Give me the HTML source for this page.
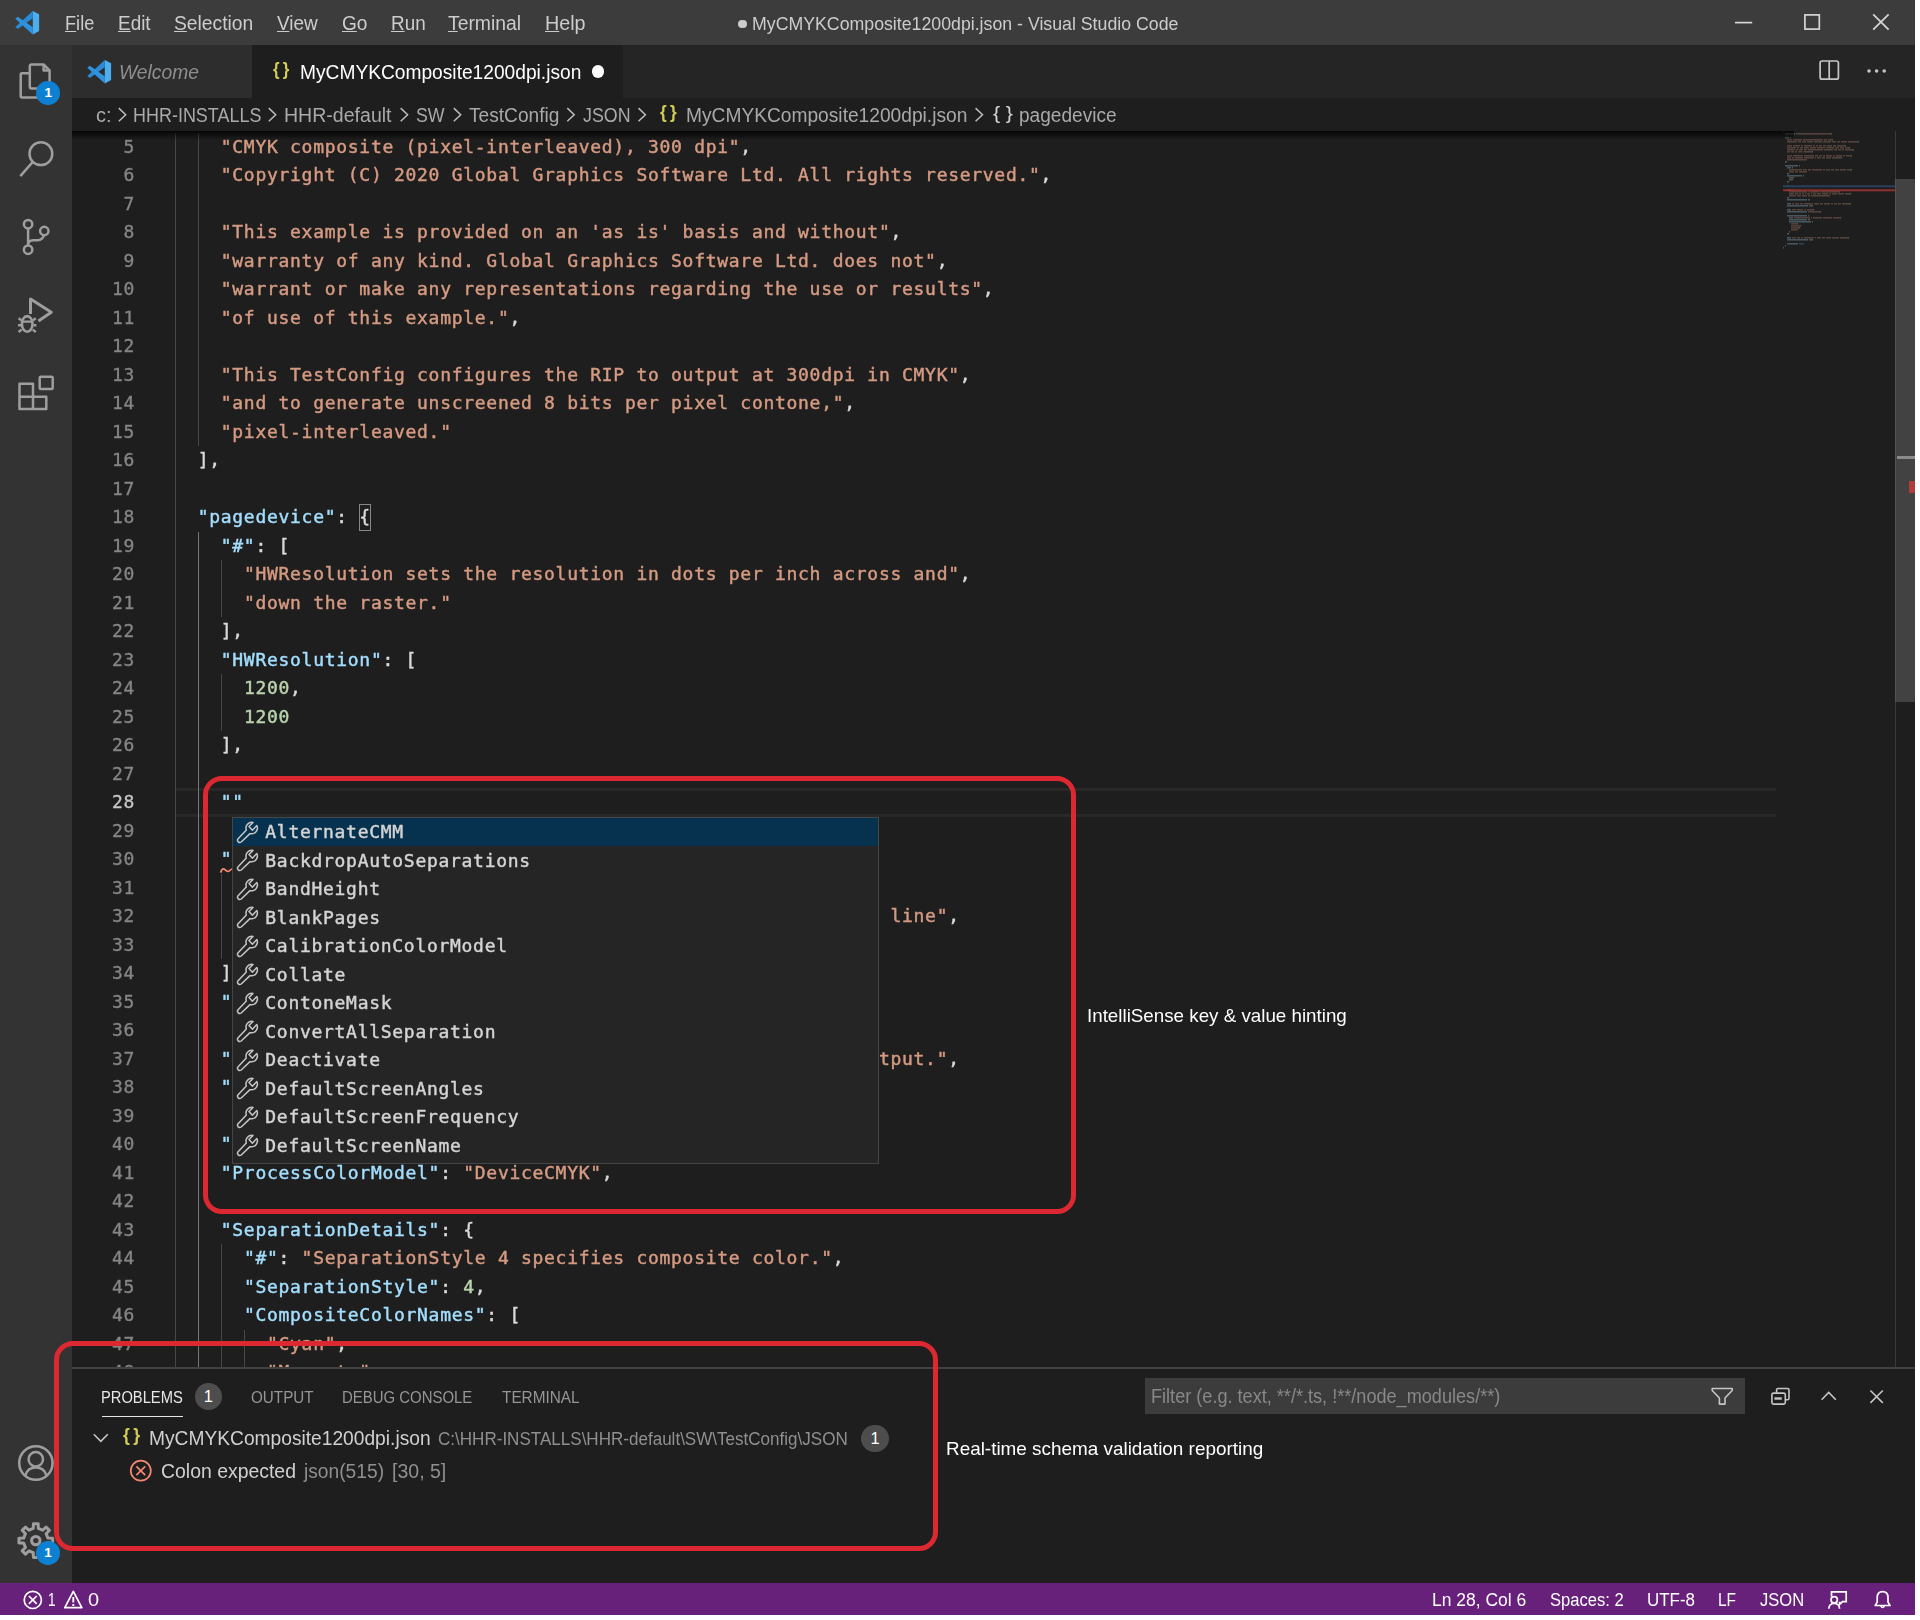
<!DOCTYPE html>
<html lang="en">
<head>
<meta charset="utf-8">
<title>MyCMYKComposite1200dpi.json - Visual Studio Code</title>
<style>
*{box-sizing:border-box}
html,body{margin:0;padding:0;background:#ffffff;}
body{width:1920px;height:1620px;position:relative;overflow:hidden;font-family:"Liberation Sans", Arial, sans-serif;}
#win{position:absolute;left:0;top:0;width:1915px;height:1615px;background:#1e1e1e;overflow:hidden}
.abs{position:absolute}
#titlebar{position:absolute;left:0;top:0;width:1915px;height:45px;background:#3c3c3c}
#activity{position:absolute;left:0;top:45px;width:72px;height:1538px;background:#333333}
#tabs{position:absolute;left:72px;top:45px;width:1843px;height:52.5px;background:#252526}
#tab1{position:absolute;left:0;top:0;width:179.7px;height:52.5px;background:#2d2d2d}
#tab2{position:absolute;left:179.7px;top:0;width:371px;height:52.5px;background:#1e1e1e}
#crumbs{position:absolute;left:72px;top:97.5px;width:1843px;height:33px;background:#1e1e1e}
#editor{position:absolute;left:72px;top:130.5px;width:1843px;height:1237.5px;background:#1e1e1e;overflow:hidden}
#edin{position:absolute;left:-72px;top:-130.5px;width:1915px;height:1615px;will-change:transform}
#texts{position:absolute;left:0;top:0;width:1915px;height:1615px;will-change:transform}
#shadow{position:absolute;left:72px;top:130.5px;width:1722px;height:9px;background:linear-gradient(#000000cc,#00000000);}
#panel{position:absolute;left:72px;top:1367.4px;width:1843px;height:215.1px;background:#1e1e1e;border-top:2px solid #414141}
#status{position:absolute;left:0;top:1582.5px;width:1915px;height:32.5px;background:#68217a}
.tx{position:absolute;white-space:pre;transform-origin:0 0;display:block}
.tx u{text-decoration-thickness:1.4px;text-underline-offset:0.6px}
.ln{position:absolute;left:72px;width:63px;text-align:right;font-family:"DejaVu Sans Mono", "Liberation Mono", monospace;font-size:18px;letter-spacing:0.709px;line-height:28.5px;height:28.5px;color:#858585;white-space:pre;-webkit-text-stroke:0.35px}
.ln.act{color:#c6c6c6}
.cl{position:absolute;left:174.6px;font-family:"DejaVu Sans Mono", "Liberation Mono", monospace;font-size:18px;letter-spacing:0.709px;line-height:28.5px;height:28.5px;color:#d4d4d4;white-space:pre;-webkit-text-stroke:0.45px}
.ig{position:absolute;width:1.5px}
#curline{position:absolute;left:174.6px;top:788.0px;width:1601.4px;height:28.5px;border-top:3px solid #282828;border-bottom:3px solid #282828}
#suggest{position:absolute;left:231.5px;top:816.5px;width:647.8px;height:347px;background:#252526;border:1.5px solid #454545;overflow:hidden}
.sr{position:absolute;left:0;width:100%;height:28.5px}
.sr.sel{background:#07324f}
.sr .wr{position:absolute;left:-1px;top:0}
.sr .st{position:absolute;left:32.8px;top:0.5px;font-family:"DejaVu Sans Mono", "Liberation Mono", monospace;font-size:18px;letter-spacing:0.709px;line-height:28.5px;color:#d4d4d4;white-space:pre;-webkit-text-stroke:0.45px}
.red{position:absolute;border:5.7px solid #dc2830;border-radius:19px}
.badge{position:absolute;border-radius:50%;color:#fff;text-align:center;font-family:"Liberation Sans", Arial, sans-serif}
</style>
</head>
<body>
<div id="win">

<div id="titlebar">
<svg class="abs" style="left:0;top:0" width="60" height="45" viewBox="0 0 60 45"><polygon points="32.8,11.1 39.1,14.25 39.1,31.1 32.8,34.5" fill="#4dadee"/><polygon points="32.8,11.1 32.8,18.3 17.8,29.0 15.3,26.9" fill="#2a8ad4"/><polygon points="32.8,34.5 32.8,27.3 17.8,16.7 15.3,18.7" fill="#2e93df"/></svg>
<div class="abs" style="left:738.3px;top:19.8px;width:8.6px;height:8.6px;border-radius:50%;background:#cccccc"></div>
<svg class="abs" style="left:1720px;top:0" width="195" height="45" viewBox="1720 0 195 45" fill="none" stroke="#d6d6d6" stroke-width="1.7">
<path d="M1735,22.6 H1752.2"/><rect x="1804.9" y="14.9" width="14.4" height="14.2"/><path d="M1873.2,14.3 L1888.6,29.7 M1888.6,14.3 L1873.2,29.7"/>
</svg>
</div>

<div id="activity"></div>
<svg class="abs" style="left:0;top:0" width="72" height="1583" viewBox="0 0 72 1583"><path d="M43.6,64.5 H31.6 Q29.8,64.5 29.8,66.3 V86.8 Q29.8,88.6 31.6,88.6 H47.8 Q49.6,88.6 49.6,86.8 V70.5 Z M43.6,64.5 V70.5 H49.6 M28.5,73.3 H22.1 Q20.7,73.3 20.7,74.7 V96 Q20.7,97.4 22.1,97.4 H39.5 Q40.9,97.4 40.9,96 V89.5" fill="none" stroke="#9e9e9e" stroke-width="2.5" stroke-linejoin="round"/><circle cx="40.9" cy="153.7" r="11.4" fill="none" stroke="#9e9e9e" stroke-width="2.5"/><path d="M32.6,162.2 L20.3,176.2" stroke="#9e9e9e" stroke-width="2.5" fill="none"/><circle cx="28.1" cy="224.2" r="4.2" fill="none" stroke="#9e9e9e" stroke-width="2.5"/><circle cx="28.1" cy="249.7" r="4.2" fill="none" stroke="#9e9e9e" stroke-width="2.5"/><circle cx="44.3" cy="231" r="4.2" fill="none" stroke="#9e9e9e" stroke-width="2.5"/><path d="M28.1,228.4 V245.5 M28.1,245 Q28.1,240.4 33,240.2 H37.5 Q42.8,239.8 43.9,235.2" fill="none" stroke="#9e9e9e" stroke-width="2.5"/><path d="M30.5,313.9 V299 L51.3,312.2 L38.4,321" fill="none" stroke="#9e9e9e" stroke-width="3" stroke-linejoin="round"/><ellipse cx="27.2" cy="323.9" rx="5.3" ry="7.8" fill="none" stroke="#9e9e9e" stroke-width="2.6"/><path d="M22,321.6 H32.4 M21.4,320.4 L18.6,318.2 M21,325.2 H18 M21.6,329.6 L18.6,332 M33,320.4 L35.8,318.2 M33.4,325.2 H36.4 M32.8,329.6 L35.8,332" fill="none" stroke="#9e9e9e" stroke-width="2.4"/><path d="M19.5,383.8 H33 V409 H19.5 Z M33,396.8 H46.3 V409 H33 M19.5,396.8 H33" fill="none" stroke="#9e9e9e" stroke-width="2.5" stroke-linejoin="round"/><rect x="39.7" y="376.7" width="13" height="12.4" rx="1.2" fill="none" stroke="#9e9e9e" stroke-width="2.5"/><circle cx="35.9" cy="1463" r="16.7" fill="none" stroke="#9e9e9e" stroke-width="2.5"/><circle cx="35.8" cy="1459.2" r="7.2" fill="none" stroke="#9e9e9e" stroke-width="2.5"/><path d="M25.2,1475.8 Q27.5,1467.6 35.8,1467.6 Q44.1,1467.6 46.6,1475.8" fill="none" stroke="#9e9e9e" stroke-width="2.5"/><path d="M33.28,1528.46 L33.45,1523.76 L38.15,1523.76 L38.32,1528.46 L42.60,1530.23 L46.05,1527.03 L49.37,1530.35 L46.17,1533.80 L47.94,1538.08 L52.64,1538.25 L52.64,1542.95 L47.94,1543.12 L46.17,1547.40 L49.37,1550.85 L46.05,1554.17 L42.60,1550.97 L38.32,1552.74 L38.15,1557.44 L33.45,1557.44 L33.28,1552.74 L29.00,1550.97 L25.55,1554.17 L22.23,1550.85 L25.43,1547.40 L23.66,1543.12 L18.96,1542.95 L18.96,1538.25 L23.66,1538.08 L25.43,1533.80 L22.23,1530.35 L25.55,1527.03 L29.00,1530.23 Z" fill="none" stroke="#9e9e9e" stroke-width="3" stroke-linejoin="round"/><circle cx="35.8" cy="1540.6" r="4.2" fill="none" stroke="#9e9e9e" stroke-width="3"/></svg>
<div class="badge" style="left:36.4px;top:81.2px;width:23.6px;height:23.6px;background:#0e80d1;font-size:13.5px;font-weight:bold;line-height:23.6px">1</div>
<div class="badge" style="left:36px;top:1541px;width:23.8px;height:23.8px;background:#0e80d1;font-size:13.5px;font-weight:bold;line-height:23.8px">1</div>

<div id="tabs">
<div id="tab1"></div><div id="tab2"></div>
</div>
<svg class="abs" style="left:72px;top:48.7px" width="60" height="45" viewBox="0 0 60 45"><polygon points="32.8,11.1 39.1,14.25 39.1,31.1 32.8,34.5" fill="#4dadee"/><polygon points="32.8,11.1 32.8,18.3 17.8,29.0 15.3,26.9" fill="#2a8ad4"/><polygon points="32.8,34.5 32.8,27.3 17.8,16.7 15.3,18.7" fill="#2e93df"/></svg>
<div class="abs" style="left:591.8px;top:65.4px;width:12.4px;height:12.4px;border-radius:50%;background:#ffffff"></div>
<svg class="abs" style="left:1800px;top:45px" width="115" height="52" viewBox="1800 45 115 52" fill="none" stroke="#c5c5c5" stroke-width="1.7">
<rect x="1820.1" y="61" width="18.3" height="18.2" rx="2"/><path d="M1829.2,61 V79.2"/>
<g fill="#c5c5c5" stroke="none"><circle cx="1869" cy="71" r="1.8"/><circle cx="1876.6" cy="71" r="1.8"/><circle cx="1884.2" cy="71" r="1.8"/></g>
</svg>

<div id="crumbs"></div>
<svg class="abs" style="left:72px;top:97.5px" width="1100" height="33" viewBox="72 97.5 1100 33" fill="none" stroke="#bdbdbd" stroke-width="1.5"><path d="M118.8,107.6 l6.9,6.6 l-6.9,6.6" /><path d="M268.8,107.6 l6.9,6.6 l-6.9,6.6" /><path d="M400.7,107.6 l6.9,6.6 l-6.9,6.6" /><path d="M453.8,107.6 l6.9,6.6 l-6.9,6.6" /><path d="M567.3,107.6 l6.9,6.6 l-6.9,6.6" /><path d="M638.5,107.6 l6.9,6.6 l-6.9,6.6" /><path d="M975.6,107.6 l6.9,6.6 l-6.9,6.6" /></svg>

<div id="editor"><div id="edin">
<div id="curline"></div>
<div class="ig" style="left:174.6px;top:132.7px;height:1254.0px;background:#474747"></div>
<div class="ig" style="left:197.7px;top:132.7px;height:313.5px;background:#474747"></div>
<div class="ig" style="left:197.7px;top:531.7px;height:855.0px;background:#767676"></div>
<div class="ig" style="left:220.8px;top:560.2px;height:57.0px;background:#474747"></div>
<div class="ig" style="left:220.8px;top:674.2px;height:57.0px;background:#474747"></div>
<div class="ig" style="left:220.8px;top:873.7px;height:85.5px;background:#474747"></div>
<div class="ig" style="left:220.8px;top:1244.2px;height:142.5px;background:#474747"></div>
<div class="ig" style="left:243.9px;top:1329.7px;height:57.0px;background:#474747"></div>
<div class="ln" style="top:132.70px">5</div>
<div class="cl" style="top:132.70px">    <span style="color:#d59a82">"CMYK composite (pixel-interleaved), 300 dpi"</span><span style="color:#dadada">,</span></div>
<div class="ln" style="top:161.20px">6</div>
<div class="cl" style="top:161.20px">    <span style="color:#d59a82">"Copyright (C) 2020 Global Graphics Software Ltd. All rights reserved."</span><span style="color:#dadada">,</span></div>
<div class="ln" style="top:189.70px">7</div>
<div class="ln" style="top:218.20px">8</div>
<div class="cl" style="top:218.20px">    <span style="color:#d59a82">"This example is provided on an 'as is' basis and without"</span><span style="color:#dadada">,</span></div>
<div class="ln" style="top:246.70px">9</div>
<div class="cl" style="top:246.70px">    <span style="color:#d59a82">"warranty of any kind. Global Graphics Software Ltd. does not"</span><span style="color:#dadada">,</span></div>
<div class="ln" style="top:275.20px">10</div>
<div class="cl" style="top:275.20px">    <span style="color:#d59a82">"warrant or make any representations regarding the use or results"</span><span style="color:#dadada">,</span></div>
<div class="ln" style="top:303.70px">11</div>
<div class="cl" style="top:303.70px">    <span style="color:#d59a82">"of use of this example."</span><span style="color:#dadada">,</span></div>
<div class="ln" style="top:332.20px">12</div>
<div class="ln" style="top:360.70px">13</div>
<div class="cl" style="top:360.70px">    <span style="color:#d59a82">"This TestConfig configures the RIP to output at 300dpi in CMYK"</span><span style="color:#dadada">,</span></div>
<div class="ln" style="top:389.20px">14</div>
<div class="cl" style="top:389.20px">    <span style="color:#d59a82">"and to generate unscreened 8 bits per pixel contone,"</span><span style="color:#dadada">,</span></div>
<div class="ln" style="top:417.70px">15</div>
<div class="cl" style="top:417.70px">    <span style="color:#d59a82">"pixel-interleaved."</span></div>
<div class="ln" style="top:446.20px">16</div>
<div class="cl" style="top:446.20px">  <span style="color:#dadada">],</span></div>
<div class="ln" style="top:474.70px">17</div>
<div class="ln" style="top:503.20px">18</div>
<div class="cl" style="top:503.20px">  <span style="color:#a3defe">"pagedevice"</span><span style="color:#dadada">: {</span></div>
<div class="ln" style="top:531.70px">19</div>
<div class="cl" style="top:531.70px">    <span style="color:#a3defe">"#"</span><span style="color:#dadada">: [</span></div>
<div class="ln" style="top:560.20px">20</div>
<div class="cl" style="top:560.20px">      <span style="color:#d59a82">"HWResolution sets the resolution in dots per inch across and"</span><span style="color:#dadada">,</span></div>
<div class="ln" style="top:588.70px">21</div>
<div class="cl" style="top:588.70px">      <span style="color:#d59a82">"down the raster."</span></div>
<div class="ln" style="top:617.20px">22</div>
<div class="cl" style="top:617.20px">    <span style="color:#dadada">],</span></div>
<div class="ln" style="top:645.70px">23</div>
<div class="cl" style="top:645.70px">    <span style="color:#a3defe">"HWResolution"</span><span style="color:#dadada">: [</span></div>
<div class="ln" style="top:674.20px">24</div>
<div class="cl" style="top:674.20px">      <span style="color:#bbd3ae">1200</span><span style="color:#dadada">,</span></div>
<div class="ln" style="top:702.70px">25</div>
<div class="cl" style="top:702.70px">      <span style="color:#bbd3ae">1200</span></div>
<div class="ln" style="top:731.20px">26</div>
<div class="cl" style="top:731.20px">    <span style="color:#dadada">],</span></div>
<div class="ln" style="top:759.70px">27</div>
<div class="ln act" style="top:788.20px">28</div>
<div class="cl" style="top:788.20px">    <span style="color:#a3defe">""</span></div>
<div class="ln" style="top:816.70px">29</div>
<div class="ln" style="top:845.20px">30</div>
<div class="cl" style="top:845.20px">    <span style="color:#a3defe">"#"</span><span style="color:#dadada">: [</span></div>
<div class="ln" style="top:873.70px">31</div>
<div class="cl" style="top:873.70px">      <span style="color:#d59a82">"InterleavingStyle 1 specifies pixel-interleaved,"</span><span style="color:#dadada">,</span></div>
<div class="ln" style="top:902.20px">32</div>
<div class="cl" style="top:902.20px">      <span style="color:#d59a82">"that is, C, M, Y and K for each pixel, in every raster line"</span><span style="color:#dadada">,</span></div>
<div class="ln" style="top:930.70px">33</div>
<div class="cl" style="top:930.70px">      <span style="color:#d59a82">"rather than band- or frame-interleaved."</span></div>
<div class="ln" style="top:959.20px">34</div>
<div class="cl" style="top:959.20px">    <span style="color:#dadada">],</span></div>
<div class="ln" style="top:987.70px">35</div>
<div class="cl" style="top:987.70px">    <span style="color:#a3defe">"InterleavingStyle"</span><span style="color:#dadada">: </span><span style="color:#bbd3ae">1</span><span style="color:#dadada">,</span></div>
<div class="ln" style="top:1016.20px">36</div>
<div class="ln" style="top:1044.70px">37</div>
<div class="cl" style="top:1044.70px">    <span style="color:#a3defe">"#"</span><span style="color:#dadada">: </span><span style="color:#d59a82">"8 bits per component gives 256 levels in the RIP output."</span><span style="color:#dadada">,</span></div>
<div class="ln" style="top:1073.20px">38</div>
<div class="cl" style="top:1073.20px">    <span style="color:#a3defe">"ValuesPerComponent"</span><span style="color:#dadada">: </span><span style="color:#bbd3ae">256</span><span style="color:#dadada">,</span></div>
<div class="ln" style="top:1101.70px">39</div>
<div class="ln" style="top:1130.20px">40</div>
<div class="cl" style="top:1130.20px">    <span style="color:#a3defe">"#"</span><span style="color:#dadada">: </span><span style="color:#d59a82">"The output is CMYK."</span><span style="color:#dadada">,</span></div>
<div class="ln" style="top:1158.70px">41</div>
<div class="cl" style="top:1158.70px">    <span style="color:#a3defe">"ProcessColorModel"</span><span style="color:#dadada">: </span><span style="color:#d59a82">"DeviceCMYK"</span><span style="color:#dadada">,</span></div>
<div class="ln" style="top:1187.20px">42</div>
<div class="ln" style="top:1215.70px">43</div>
<div class="cl" style="top:1215.70px">    <span style="color:#a3defe">"SeparationDetails"</span><span style="color:#dadada">: {</span></div>
<div class="ln" style="top:1244.20px">44</div>
<div class="cl" style="top:1244.20px">      <span style="color:#a3defe">"#"</span><span style="color:#dadada">: </span><span style="color:#d59a82">"SeparationStyle 4 specifies composite color."</span><span style="color:#dadada">,</span></div>
<div class="ln" style="top:1272.70px">45</div>
<div class="cl" style="top:1272.70px">      <span style="color:#a3defe">"SeparationStyle"</span><span style="color:#dadada">: </span><span style="color:#bbd3ae">4</span><span style="color:#dadada">,</span></div>
<div class="ln" style="top:1301.20px">46</div>
<div class="cl" style="top:1301.20px">      <span style="color:#a3defe">"CompositeColorNames"</span><span style="color:#dadada">: [</span></div>
<div class="ln" style="top:1329.70px">47</div>
<div class="cl" style="top:1329.70px">        <span style="color:#d59a82">"Cyan"</span><span style="color:#dadada">,</span></div>
<div class="ln" style="top:1358.20px">48</div>
<div class="cl" style="top:1358.20px">        <span style="color:#d59a82">"Magenta"</span><span style="color:#dadada">,</span></div>
<div class="abs" style="left:358.6px;top:503.8px;width:12.6px;height:27px;border:1.5px solid #888888"></div>
<svg class="abs" style="left:218px;top:864px" width="20" height="12" viewBox="218 864 20 12" fill="none" stroke="#f48771" stroke-width="1.8"><path d="M220.6,872.6 q1.9,-5.6 4.4,-2.9 q2.6,2.9 4.6,0.9 q1.2,-1.3 2.4,-1.6"/></svg>
<svg class="abs" style="left:0;top:0" width="1915" height="400" viewBox="0 0 1915 400"><g opacity="0.42"><rect x="1783" y="131.3" width="1" height="1.1" fill="#dadada"/><rect x="1785" y="133.3" width="9" height="1.1" fill="#a3defe"/><rect x="1794" y="133.3" width="1" height="1.1" fill="#dadada"/><rect x="1796" y="133.3" width="35" height="1.1" fill="#d59a82"/><rect x="1831" y="133.3" width="1" height="1.1" fill="#dadada"/><rect x="1785" y="137.3" width="3" height="1.1" fill="#a3defe"/><rect x="1788" y="137.3" width="1" height="1.1" fill="#dadada"/><rect x="1790" y="137.3" width="1" height="1.1" fill="#dadada"/><rect x="1787" y="139.3" width="5" height="1.1" fill="#d59a82"/><rect x="1793" y="139.3" width="9" height="1.1" fill="#d59a82"/><rect x="1803" y="139.3" width="20" height="1.1" fill="#d59a82"/><rect x="1824" y="139.3" width="3" height="1.1" fill="#d59a82"/><rect x="1828" y="139.3" width="4" height="1.1" fill="#d59a82"/><rect x="1832" y="139.3" width="1" height="1.1" fill="#dadada"/><rect x="1787" y="141.3" width="10" height="1.1" fill="#d59a82"/><rect x="1798" y="141.3" width="3" height="1.1" fill="#d59a82"/><rect x="1802" y="141.3" width="4" height="1.1" fill="#d59a82"/><rect x="1807" y="141.3" width="6" height="1.1" fill="#d59a82"/><rect x="1814" y="141.3" width="8" height="1.1" fill="#d59a82"/><rect x="1823" y="141.3" width="8" height="1.1" fill="#d59a82"/><rect x="1832" y="141.3" width="4" height="1.1" fill="#d59a82"/><rect x="1837" y="141.3" width="3" height="1.1" fill="#d59a82"/><rect x="1841" y="141.3" width="6" height="1.1" fill="#d59a82"/><rect x="1848" y="141.3" width="10" height="1.1" fill="#d59a82"/><rect x="1858" y="141.3" width="1" height="1.1" fill="#dadada"/><rect x="1787" y="145.3" width="5" height="1.1" fill="#d59a82"/><rect x="1793" y="145.3" width="7" height="1.1" fill="#d59a82"/><rect x="1801" y="145.3" width="2" height="1.1" fill="#d59a82"/><rect x="1804" y="145.3" width="8" height="1.1" fill="#d59a82"/><rect x="1813" y="145.3" width="2" height="1.1" fill="#d59a82"/><rect x="1816" y="145.3" width="2" height="1.1" fill="#d59a82"/><rect x="1819" y="145.3" width="3" height="1.1" fill="#d59a82"/><rect x="1823" y="145.3" width="3" height="1.1" fill="#d59a82"/><rect x="1827" y="145.3" width="5" height="1.1" fill="#d59a82"/><rect x="1833" y="145.3" width="3" height="1.1" fill="#d59a82"/><rect x="1837" y="145.3" width="8" height="1.1" fill="#d59a82"/><rect x="1845" y="145.3" width="1" height="1.1" fill="#dadada"/><rect x="1787" y="147.3" width="9" height="1.1" fill="#d59a82"/><rect x="1797" y="147.3" width="2" height="1.1" fill="#d59a82"/><rect x="1800" y="147.3" width="3" height="1.1" fill="#d59a82"/><rect x="1804" y="147.3" width="5" height="1.1" fill="#d59a82"/><rect x="1810" y="147.3" width="6" height="1.1" fill="#d59a82"/><rect x="1817" y="147.3" width="8" height="1.1" fill="#d59a82"/><rect x="1826" y="147.3" width="8" height="1.1" fill="#d59a82"/><rect x="1835" y="147.3" width="4" height="1.1" fill="#d59a82"/><rect x="1840" y="147.3" width="4" height="1.1" fill="#d59a82"/><rect x="1845" y="147.3" width="4" height="1.1" fill="#d59a82"/><rect x="1849" y="147.3" width="1" height="1.1" fill="#dadada"/><rect x="1787" y="149.3" width="8" height="1.1" fill="#d59a82"/><rect x="1796" y="149.3" width="2" height="1.1" fill="#d59a82"/><rect x="1799" y="149.3" width="4" height="1.1" fill="#d59a82"/><rect x="1804" y="149.3" width="3" height="1.1" fill="#d59a82"/><rect x="1808" y="149.3" width="15" height="1.1" fill="#d59a82"/><rect x="1824" y="149.3" width="9" height="1.1" fill="#d59a82"/><rect x="1834" y="149.3" width="3" height="1.1" fill="#d59a82"/><rect x="1838" y="149.3" width="3" height="1.1" fill="#d59a82"/><rect x="1842" y="149.3" width="2" height="1.1" fill="#d59a82"/><rect x="1845" y="149.3" width="8" height="1.1" fill="#d59a82"/><rect x="1853" y="149.3" width="1" height="1.1" fill="#dadada"/><rect x="1787" y="151.3" width="3" height="1.1" fill="#d59a82"/><rect x="1791" y="151.3" width="3" height="1.1" fill="#d59a82"/><rect x="1795" y="151.3" width="2" height="1.1" fill="#d59a82"/><rect x="1798" y="151.3" width="4" height="1.1" fill="#d59a82"/><rect x="1803" y="151.3" width="9" height="1.1" fill="#d59a82"/><rect x="1812" y="151.3" width="1" height="1.1" fill="#dadada"/><rect x="1787" y="155.3" width="5" height="1.1" fill="#d59a82"/><rect x="1793" y="155.3" width="10" height="1.1" fill="#d59a82"/><rect x="1804" y="155.3" width="10" height="1.1" fill="#d59a82"/><rect x="1815" y="155.3" width="3" height="1.1" fill="#d59a82"/><rect x="1819" y="155.3" width="3" height="1.1" fill="#d59a82"/><rect x="1823" y="155.3" width="2" height="1.1" fill="#d59a82"/><rect x="1826" y="155.3" width="6" height="1.1" fill="#d59a82"/><rect x="1833" y="155.3" width="2" height="1.1" fill="#d59a82"/><rect x="1836" y="155.3" width="6" height="1.1" fill="#d59a82"/><rect x="1843" y="155.3" width="2" height="1.1" fill="#d59a82"/><rect x="1846" y="155.3" width="5" height="1.1" fill="#d59a82"/><rect x="1851" y="155.3" width="1" height="1.1" fill="#dadada"/><rect x="1787" y="157.3" width="4" height="1.1" fill="#d59a82"/><rect x="1792" y="157.3" width="2" height="1.1" fill="#d59a82"/><rect x="1795" y="157.3" width="8" height="1.1" fill="#d59a82"/><rect x="1804" y="157.3" width="10" height="1.1" fill="#d59a82"/><rect x="1815" y="157.3" width="1" height="1.1" fill="#d59a82"/><rect x="1817" y="157.3" width="4" height="1.1" fill="#d59a82"/><rect x="1822" y="157.3" width="3" height="1.1" fill="#d59a82"/><rect x="1826" y="157.3" width="5" height="1.1" fill="#d59a82"/><rect x="1832" y="157.3" width="9" height="1.1" fill="#d59a82"/><rect x="1841" y="157.3" width="1" height="1.1" fill="#dadada"/><rect x="1787" y="159.3" width="20" height="1.1" fill="#d59a82"/><rect x="1785" y="161.3" width="2" height="1.1" fill="#dadada"/><rect x="1785" y="165.3" width="12" height="1.1" fill="#a3defe"/><rect x="1797" y="165.3" width="1" height="1.1" fill="#dadada"/><rect x="1799" y="165.3" width="1" height="1.1" fill="#dadada"/><rect x="1787" y="167.3" width="3" height="1.1" fill="#a3defe"/><rect x="1790" y="167.3" width="1" height="1.1" fill="#dadada"/><rect x="1792" y="167.3" width="1" height="1.1" fill="#dadada"/><rect x="1789" y="169.3" width="13" height="1.1" fill="#d59a82"/><rect x="1803" y="169.3" width="4" height="1.1" fill="#d59a82"/><rect x="1808" y="169.3" width="3" height="1.1" fill="#d59a82"/><rect x="1812" y="169.3" width="10" height="1.1" fill="#d59a82"/><rect x="1823" y="169.3" width="2" height="1.1" fill="#d59a82"/><rect x="1826" y="169.3" width="4" height="1.1" fill="#d59a82"/><rect x="1831" y="169.3" width="3" height="1.1" fill="#d59a82"/><rect x="1835" y="169.3" width="4" height="1.1" fill="#d59a82"/><rect x="1840" y="169.3" width="6" height="1.1" fill="#d59a82"/><rect x="1847" y="169.3" width="4" height="1.1" fill="#d59a82"/><rect x="1851" y="169.3" width="1" height="1.1" fill="#dadada"/><rect x="1789" y="171.3" width="5" height="1.1" fill="#d59a82"/><rect x="1795" y="171.3" width="3" height="1.1" fill="#d59a82"/><rect x="1799" y="171.3" width="8" height="1.1" fill="#d59a82"/><rect x="1787" y="173.3" width="2" height="1.1" fill="#dadada"/><rect x="1787" y="175.3" width="14" height="1.1" fill="#a3defe"/><rect x="1801" y="175.3" width="1" height="1.1" fill="#dadada"/><rect x="1803" y="175.3" width="1" height="1.1" fill="#dadada"/><rect x="1789" y="177.3" width="4" height="1.1" fill="#bbd3ae"/><rect x="1793" y="177.3" width="1" height="1.1" fill="#dadada"/><rect x="1789" y="179.3" width="4" height="1.1" fill="#bbd3ae"/><rect x="1787" y="181.3" width="2" height="1.1" fill="#dadada"/><rect x="1787" y="185.3" width="2" height="1.1" fill="#a3defe"/><rect x="1787" y="189.3" width="3" height="1.1" fill="#a3defe"/><rect x="1790" y="189.3" width="1" height="1.1" fill="#dadada"/><rect x="1792" y="189.3" width="1" height="1.1" fill="#dadada"/><rect x="1789" y="191.3" width="18" height="1.1" fill="#d59a82"/><rect x="1808" y="191.3" width="1" height="1.1" fill="#d59a82"/><rect x="1810" y="191.3" width="9" height="1.1" fill="#d59a82"/><rect x="1820" y="191.3" width="19" height="1.1" fill="#d59a82"/><rect x="1839" y="191.3" width="1" height="1.1" fill="#dadada"/><rect x="1789" y="193.3" width="5" height="1.1" fill="#d59a82"/><rect x="1795" y="193.3" width="3" height="1.1" fill="#d59a82"/><rect x="1799" y="193.3" width="2" height="1.1" fill="#d59a82"/><rect x="1802" y="193.3" width="2" height="1.1" fill="#d59a82"/><rect x="1805" y="193.3" width="1" height="1.1" fill="#d59a82"/><rect x="1807" y="193.3" width="3" height="1.1" fill="#d59a82"/><rect x="1811" y="193.3" width="1" height="1.1" fill="#d59a82"/><rect x="1813" y="193.3" width="3" height="1.1" fill="#d59a82"/><rect x="1817" y="193.3" width="4" height="1.1" fill="#d59a82"/><rect x="1822" y="193.3" width="6" height="1.1" fill="#d59a82"/><rect x="1829" y="193.3" width="2" height="1.1" fill="#d59a82"/><rect x="1832" y="193.3" width="5" height="1.1" fill="#d59a82"/><rect x="1838" y="193.3" width="6" height="1.1" fill="#d59a82"/><rect x="1845" y="193.3" width="5" height="1.1" fill="#d59a82"/><rect x="1850" y="193.3" width="1" height="1.1" fill="#dadada"/><rect x="1789" y="195.3" width="7" height="1.1" fill="#d59a82"/><rect x="1797" y="195.3" width="4" height="1.1" fill="#d59a82"/><rect x="1802" y="195.3" width="5" height="1.1" fill="#d59a82"/><rect x="1808" y="195.3" width="2" height="1.1" fill="#d59a82"/><rect x="1811" y="195.3" width="19" height="1.1" fill="#d59a82"/><rect x="1787" y="197.3" width="2" height="1.1" fill="#dadada"/><rect x="1787" y="199.3" width="19" height="1.1" fill="#a3defe"/><rect x="1806" y="199.3" width="1" height="1.1" fill="#dadada"/><rect x="1808" y="199.3" width="1" height="1.1" fill="#bbd3ae"/><rect x="1809" y="199.3" width="1" height="1.1" fill="#dadada"/><rect x="1787" y="203.3" width="3" height="1.1" fill="#a3defe"/><rect x="1790" y="203.3" width="1" height="1.1" fill="#dadada"/><rect x="1792" y="203.3" width="2" height="1.1" fill="#d59a82"/><rect x="1795" y="203.3" width="4" height="1.1" fill="#d59a82"/><rect x="1800" y="203.3" width="3" height="1.1" fill="#d59a82"/><rect x="1804" y="203.3" width="9" height="1.1" fill="#d59a82"/><rect x="1814" y="203.3" width="5" height="1.1" fill="#d59a82"/><rect x="1820" y="203.3" width="3" height="1.1" fill="#d59a82"/><rect x="1824" y="203.3" width="6" height="1.1" fill="#d59a82"/><rect x="1831" y="203.3" width="2" height="1.1" fill="#d59a82"/><rect x="1834" y="203.3" width="3" height="1.1" fill="#d59a82"/><rect x="1838" y="203.3" width="3" height="1.1" fill="#d59a82"/><rect x="1842" y="203.3" width="8" height="1.1" fill="#d59a82"/><rect x="1850" y="203.3" width="1" height="1.1" fill="#dadada"/><rect x="1787" y="205.3" width="20" height="1.1" fill="#a3defe"/><rect x="1807" y="205.3" width="1" height="1.1" fill="#dadada"/><rect x="1809" y="205.3" width="3" height="1.1" fill="#bbd3ae"/><rect x="1812" y="205.3" width="1" height="1.1" fill="#dadada"/><rect x="1787" y="209.3" width="3" height="1.1" fill="#a3defe"/><rect x="1790" y="209.3" width="1" height="1.1" fill="#dadada"/><rect x="1792" y="209.3" width="4" height="1.1" fill="#d59a82"/><rect x="1797" y="209.3" width="6" height="1.1" fill="#d59a82"/><rect x="1804" y="209.3" width="2" height="1.1" fill="#d59a82"/><rect x="1807" y="209.3" width="6" height="1.1" fill="#d59a82"/><rect x="1813" y="209.3" width="1" height="1.1" fill="#dadada"/><rect x="1787" y="211.3" width="19" height="1.1" fill="#a3defe"/><rect x="1806" y="211.3" width="1" height="1.1" fill="#dadada"/><rect x="1808" y="211.3" width="12" height="1.1" fill="#d59a82"/><rect x="1820" y="211.3" width="1" height="1.1" fill="#dadada"/><rect x="1787" y="215.3" width="19" height="1.1" fill="#a3defe"/><rect x="1806" y="215.3" width="1" height="1.1" fill="#dadada"/><rect x="1808" y="215.3" width="1" height="1.1" fill="#dadada"/><rect x="1789" y="217.3" width="3" height="1.1" fill="#a3defe"/><rect x="1792" y="217.3" width="1" height="1.1" fill="#dadada"/><rect x="1794" y="217.3" width="16" height="1.1" fill="#d59a82"/><rect x="1811" y="217.3" width="1" height="1.1" fill="#d59a82"/><rect x="1813" y="217.3" width="9" height="1.1" fill="#d59a82"/><rect x="1823" y="217.3" width="9" height="1.1" fill="#d59a82"/><rect x="1833" y="217.3" width="7" height="1.1" fill="#d59a82"/><rect x="1840" y="217.3" width="1" height="1.1" fill="#dadada"/><rect x="1789" y="219.3" width="17" height="1.1" fill="#a3defe"/><rect x="1806" y="219.3" width="1" height="1.1" fill="#dadada"/><rect x="1808" y="219.3" width="1" height="1.1" fill="#bbd3ae"/><rect x="1809" y="219.3" width="1" height="1.1" fill="#dadada"/><rect x="1789" y="221.3" width="21" height="1.1" fill="#a3defe"/><rect x="1810" y="221.3" width="1" height="1.1" fill="#dadada"/><rect x="1812" y="221.3" width="1" height="1.1" fill="#dadada"/><rect x="1791" y="223.3" width="6" height="1.1" fill="#d59a82"/><rect x="1797" y="223.3" width="1" height="1.1" fill="#dadada"/><rect x="1791" y="225.3" width="9" height="1.1" fill="#d59a82"/><rect x="1800" y="225.3" width="1" height="1.1" fill="#dadada"/><rect x="1791" y="227.3" width="8" height="1.1" fill="#d59a82"/><rect x="1799" y="227.3" width="1" height="1.1" fill="#dadada"/><rect x="1791" y="229.3" width="7" height="1.1" fill="#d59a82"/><rect x="1789" y="231.3" width="1" height="1.1" fill="#dadada"/><rect x="1787" y="233.3" width="2" height="1.1" fill="#dadada"/><rect x="1787" y="237.3" width="3" height="1.1" fill="#a3defe"/><rect x="1790" y="237.3" width="1" height="1.1" fill="#dadada"/><rect x="1792" y="237.3" width="4" height="1.1" fill="#d59a82"/><rect x="1797" y="237.3" width="3" height="1.1" fill="#d59a82"/><rect x="1801" y="237.3" width="2" height="1.1" fill="#d59a82"/><rect x="1804" y="237.3" width="10" height="1.1" fill="#d59a82"/><rect x="1815" y="237.3" width="1" height="1.1" fill="#d59a82"/><rect x="1817" y="237.3" width="4" height="1.1" fill="#d59a82"/><rect x="1822" y="237.3" width="3" height="1.1" fill="#d59a82"/><rect x="1826" y="237.3" width="5" height="1.1" fill="#d59a82"/><rect x="1832" y="237.3" width="7" height="1.1" fill="#d59a82"/><rect x="1840" y="237.3" width="8" height="1.1" fill="#d59a82"/><rect x="1848" y="237.3" width="1" height="1.1" fill="#dadada"/><rect x="1787" y="239.3" width="20" height="1.1" fill="#a3defe"/><rect x="1807" y="239.3" width="1" height="1.1" fill="#dadada"/><rect x="1809" y="239.3" width="3" height="1.1" fill="#bbd3ae"/><rect x="1812" y="239.3" width="1" height="1.1" fill="#dadada"/><rect x="1787" y="243.3" width="10" height="1.1" fill="#a3defe"/><rect x="1797" y="243.3" width="1" height="1.1" fill="#dadada"/><rect x="1799" y="243.3" width="5" height="1.1" fill="#569cd6"/><rect x="1785" y="245.3" width="1" height="1.1" fill="#dadada"/><rect x="1783" y="247.3" width="1" height="1.1" fill="#dadada"/></g><rect x="1783" y="185.3" width="112" height="2" fill="#2b3f5c"/><rect x="1783" y="189.3" width="112" height="2" fill="#8f3030"/></svg>
<div class="abs" style="left:1895px;top:179px;width:20px;height:522.5px;background:#424242"></div>
<div class="abs" style="left:1895px;top:130.5px;width:20px;height:1237.5px;border-left:1.5px solid rgba(127,127,127,0.3)"></div>
<div class="abs" style="left:1896.5px;top:456px;width:18.5px;height:3px;background:#8a8a8a"></div>
<div class="abs" style="left:1909.3px;top:481px;width:5.7px;height:12px;background:#b23b3b"></div>
<div id="suggest"><div class="sr sel" style="top:0.0px"><svg class="wr" width="30" height="28" viewBox="232 818 30 28"><path d="M253,822.5 L249,826.5 L252.4,830.2 L256.8,825.5 A5.8,5.8 0 0 1 250,833.6 L241.2,842 A2.3,2.3 0 0 1 237.9,838.9 L246.3,830 A5.8,5.8 0 0 1 253,822.5 Z" fill="none" stroke="#c5c5c5" stroke-width="1.5" stroke-linejoin="round"/></svg><span class="st">AlternateCMM</span></div><div class="sr" style="top:28.5px"><svg class="wr" width="30" height="28" viewBox="232 818 30 28"><path d="M253,822.5 L249,826.5 L252.4,830.2 L256.8,825.5 A5.8,5.8 0 0 1 250,833.6 L241.2,842 A2.3,2.3 0 0 1 237.9,838.9 L246.3,830 A5.8,5.8 0 0 1 253,822.5 Z" fill="none" stroke="#c5c5c5" stroke-width="1.5" stroke-linejoin="round"/></svg><span class="st">BackdropAutoSeparations</span></div><div class="sr" style="top:57.0px"><svg class="wr" width="30" height="28" viewBox="232 818 30 28"><path d="M253,822.5 L249,826.5 L252.4,830.2 L256.8,825.5 A5.8,5.8 0 0 1 250,833.6 L241.2,842 A2.3,2.3 0 0 1 237.9,838.9 L246.3,830 A5.8,5.8 0 0 1 253,822.5 Z" fill="none" stroke="#c5c5c5" stroke-width="1.5" stroke-linejoin="round"/></svg><span class="st">BandHeight</span></div><div class="sr" style="top:85.5px"><svg class="wr" width="30" height="28" viewBox="232 818 30 28"><path d="M253,822.5 L249,826.5 L252.4,830.2 L256.8,825.5 A5.8,5.8 0 0 1 250,833.6 L241.2,842 A2.3,2.3 0 0 1 237.9,838.9 L246.3,830 A5.8,5.8 0 0 1 253,822.5 Z" fill="none" stroke="#c5c5c5" stroke-width="1.5" stroke-linejoin="round"/></svg><span class="st">BlankPages</span></div><div class="sr" style="top:114.0px"><svg class="wr" width="30" height="28" viewBox="232 818 30 28"><path d="M253,822.5 L249,826.5 L252.4,830.2 L256.8,825.5 A5.8,5.8 0 0 1 250,833.6 L241.2,842 A2.3,2.3 0 0 1 237.9,838.9 L246.3,830 A5.8,5.8 0 0 1 253,822.5 Z" fill="none" stroke="#c5c5c5" stroke-width="1.5" stroke-linejoin="round"/></svg><span class="st">CalibrationColorModel</span></div><div class="sr" style="top:142.5px"><svg class="wr" width="30" height="28" viewBox="232 818 30 28"><path d="M253,822.5 L249,826.5 L252.4,830.2 L256.8,825.5 A5.8,5.8 0 0 1 250,833.6 L241.2,842 A2.3,2.3 0 0 1 237.9,838.9 L246.3,830 A5.8,5.8 0 0 1 253,822.5 Z" fill="none" stroke="#c5c5c5" stroke-width="1.5" stroke-linejoin="round"/></svg><span class="st">Collate</span></div><div class="sr" style="top:171.0px"><svg class="wr" width="30" height="28" viewBox="232 818 30 28"><path d="M253,822.5 L249,826.5 L252.4,830.2 L256.8,825.5 A5.8,5.8 0 0 1 250,833.6 L241.2,842 A2.3,2.3 0 0 1 237.9,838.9 L246.3,830 A5.8,5.8 0 0 1 253,822.5 Z" fill="none" stroke="#c5c5c5" stroke-width="1.5" stroke-linejoin="round"/></svg><span class="st">ContoneMask</span></div><div class="sr" style="top:199.5px"><svg class="wr" width="30" height="28" viewBox="232 818 30 28"><path d="M253,822.5 L249,826.5 L252.4,830.2 L256.8,825.5 A5.8,5.8 0 0 1 250,833.6 L241.2,842 A2.3,2.3 0 0 1 237.9,838.9 L246.3,830 A5.8,5.8 0 0 1 253,822.5 Z" fill="none" stroke="#c5c5c5" stroke-width="1.5" stroke-linejoin="round"/></svg><span class="st">ConvertAllSeparation</span></div><div class="sr" style="top:228.0px"><svg class="wr" width="30" height="28" viewBox="232 818 30 28"><path d="M253,822.5 L249,826.5 L252.4,830.2 L256.8,825.5 A5.8,5.8 0 0 1 250,833.6 L241.2,842 A2.3,2.3 0 0 1 237.9,838.9 L246.3,830 A5.8,5.8 0 0 1 253,822.5 Z" fill="none" stroke="#c5c5c5" stroke-width="1.5" stroke-linejoin="round"/></svg><span class="st">Deactivate</span></div><div class="sr" style="top:256.5px"><svg class="wr" width="30" height="28" viewBox="232 818 30 28"><path d="M253,822.5 L249,826.5 L252.4,830.2 L256.8,825.5 A5.8,5.8 0 0 1 250,833.6 L241.2,842 A2.3,2.3 0 0 1 237.9,838.9 L246.3,830 A5.8,5.8 0 0 1 253,822.5 Z" fill="none" stroke="#c5c5c5" stroke-width="1.5" stroke-linejoin="round"/></svg><span class="st">DefaultScreenAngles</span></div><div class="sr" style="top:285.0px"><svg class="wr" width="30" height="28" viewBox="232 818 30 28"><path d="M253,822.5 L249,826.5 L252.4,830.2 L256.8,825.5 A5.8,5.8 0 0 1 250,833.6 L241.2,842 A2.3,2.3 0 0 1 237.9,838.9 L246.3,830 A5.8,5.8 0 0 1 253,822.5 Z" fill="none" stroke="#c5c5c5" stroke-width="1.5" stroke-linejoin="round"/></svg><span class="st">DefaultScreenFrequency</span></div><div class="sr" style="top:313.5px"><svg class="wr" width="30" height="28" viewBox="232 818 30 28"><path d="M253,822.5 L249,826.5 L252.4,830.2 L256.8,825.5 A5.8,5.8 0 0 1 250,833.6 L241.2,842 A2.3,2.3 0 0 1 237.9,838.9 L246.3,830 A5.8,5.8 0 0 1 253,822.5 Z" fill="none" stroke="#c5c5c5" stroke-width="1.5" stroke-linejoin="round"/></svg><span class="st">DefaultScreenName</span></div></div>
</div></div>
<div id="shadow"></div>

<div id="panel"></div>
<div class="abs" style="left:102px;top:1415.6px;width:81px;height:1.5px;background:#e7e7e7"></div>
<div class="badge" style="left:195px;top:1383.4px;width:26.7px;height:26.7px;background:#4d4d4d;font-size:16.5px;line-height:26.7px">1</div>
<div class="badge" style="left:861.4px;top:1425px;width:27.2px;height:27.2px;background:#4d4d4d;font-size:16.5px;line-height:27.2px">1</div>
<div class="abs" style="left:1145.2px;top:1378.2px;width:600px;height:35.5px;background:#3c3c3c"></div>
<svg class="abs" style="left:72px;top:1369.5px" width="1843" height="213" viewBox="72 1369.5 1843 213" fill="none" stroke="#c5c5c5" stroke-width="1.6">
<path d="M1712.2,1388 H1732.2 V1390 L1725,1397.5 V1403.6 H1719.4 V1397.5 L1712.2,1390 Z" stroke-linejoin="round"/>
<rect x="1771.9" y="1392.6" width="13.4" height="11" rx="1.6"/><path d="M1776.6,1392.2 V1389.4 Q1776.6,1388 1778,1388 H1787.6 Q1789,1388 1789,1389.4 V1397.8 Q1789,1399.2 1787.6,1399.2 H1785.6"/><path d="M1774.4,1398 H1781.8" stroke-width="2.4"/>
<path d="M1821.6,1399.2 L1828.7,1392 L1835.8,1399.2"/>
<path d="M1870.4,1390 L1882.8,1402.4 M1882.8,1390 L1870.4,1402.4"/>
<path d="M93.8,1433.8 L100.8,1440.8 L107.8,1433.8"/>
<g stroke="#f48771" stroke-width="1.7"><circle cx="140.8" cy="1470.2" r="10"/><path d="M136.4,1465.8 L145.2,1474.6 M145.2,1465.8 L136.4,1474.6"/></g>
</svg>

<div id="status"></div>
<svg class="abs" style="left:0;top:1582.5px" width="1915" height="32.5" viewBox="0 1582.5 1915 32.5" fill="none" stroke="#ffffff" stroke-width="1.7">
<circle cx="32.8" cy="1599.4" r="8.6"/><path d="M28.9,1595.5 L36.7,1603.3 M36.7,1595.5 L28.9,1603.3"/>
<path d="M73.3,1590.8 L81.8,1607.2 H64.8 Z" stroke-linejoin="round"/><path d="M73.3,1596.5 V1602 M73.3,1603.6 V1605.4" stroke-width="1.9"/>
<path d="M1831.5,1596 V1591.3 H1846.2 V1601.2 H1842.5 L1839.6,1604 V1601.2"/><circle cx="1834.2" cy="1599.3" r="3.2"/><path d="M1828.8,1608.2 Q1829.2,1603 1834.2,1603 Q1839.2,1603 1839.6,1608.2"/>
<path d="M1875.2,1605 H1890 L1888,1601.6 V1597.2 Q1888,1591.2 1882.6,1591.2 Q1877.2,1591.2 1877.2,1597.2 V1601.6 Z" stroke-linejoin="round"/><path d="M1880.8,1605.4 Q1882.6,1608.6 1884.4,1605.4"/>
</svg>

<div class="red" style="left:203px;top:776.4px;width:873.3px;height:437.8px"></div>
<div class="red" style="left:54px;top:1340.8px;width:884.3px;height:210.5px"></div>

<div id="texts">
<span class="tx" style="left:64.70px;top:11.80px;font-size:19.5px;line-height:22.00px;color:#cccccc;transform:scaleX(0.9311)"><u>F</u>ile</span>
<span class="tx" style="left:118.10px;top:11.80px;font-size:19.5px;line-height:22.00px;color:#cccccc;transform:scaleX(0.9701)"><u>E</u>dit</span>
<span class="tx" style="left:174.40px;top:11.80px;font-size:19.5px;line-height:22.00px;color:#cccccc;transform:scaleX(0.9886)"><u>S</u>election</span>
<span class="tx" style="left:276.90px;top:11.80px;font-size:19.5px;line-height:22.00px;color:#cccccc;transform:scaleX(0.9738)"><u>V</u>iew</span>
<span class="tx" style="left:341.60px;top:11.80px;font-size:19.5px;line-height:22.00px;color:#cccccc;transform:scaleX(0.9782)"><u>G</u>o</span>
<span class="tx" style="left:390.60px;top:11.80px;font-size:19.5px;line-height:22.00px;color:#cccccc;transform:scaleX(0.9681)"><u>R</u>un</span>
<span class="tx" style="left:448.40px;top:11.80px;font-size:19.5px;line-height:22.00px;color:#cccccc;transform:scaleX(0.9917)"><u>T</u>erminal</span>
<span class="tx" style="left:545.30px;top:11.80px;font-size:19.5px;line-height:22.00px;color:#cccccc;transform:scaleX(1.0115)"><u>H</u>elp</span>
<span class="tx" style="left:752.27px;top:13.70px;font-size:18px;line-height:20.00px;color:#cccccc;transform:scaleX(0.9849)">MyCMYKComposite1200dpi.json - Visual Studio Code</span>
<span class="tx" style="left:118.67px;top:60.75px;font-size:19.5px;line-height:22.00px;color:#8e8e8e;font-style:italic;transform:scaleX(0.9885)">Welcome</span>
<span class="tx" style="left:273.47px;top:59.30px;font-size:18.1px;line-height:20.00px;color:#d0cc55;font-weight:bold;letter-spacing:3.4px;transform:scaleX(0.9294)">{}</span>
<span class="tx" style="left:299.52px;top:60.75px;font-size:19.5px;line-height:22.00px;color:#ffffff;transform:scaleX(0.9834)">MyCMYKComposite1200dpi.json</span>
<span class="tx" style="left:95.63px;top:103.70px;font-size:19.5px;line-height:22.00px;color:#a9a9a9;transform:scaleX(1.0275)">c:</span>
<span class="tx" style="left:132.52px;top:103.70px;font-size:19.5px;line-height:22.00px;color:#a9a9a9;transform:scaleX(0.9212)">HHR-INSTALLS</span>
<span class="tx" style="left:283.90px;top:103.70px;font-size:19.5px;line-height:22.00px;color:#a9a9a9;transform:scaleX(1.0024)">HHR-default</span>
<span class="tx" style="left:416.02px;top:103.70px;font-size:19.5px;line-height:22.00px;color:#a9a9a9;transform:scaleX(0.9115)">SW</span>
<span class="tx" style="left:468.65px;top:103.70px;font-size:19.5px;line-height:22.00px;color:#a9a9a9;transform:scaleX(0.9807)">TestConfig</span>
<span class="tx" style="left:582.77px;top:103.70px;font-size:19.5px;line-height:22.00px;color:#a9a9a9;transform:scaleX(0.9134)">JSON</span>
<span class="tx" style="left:685.72px;top:103.70px;font-size:19.5px;line-height:22.00px;color:#a9a9a9;transform:scaleX(0.9834)">MyCMYKComposite1200dpi.json</span>
<span class="tx" style="left:1019.38px;top:103.70px;font-size:19.5px;line-height:22.00px;color:#a9a9a9;transform:scaleX(0.9790)">pagedevice</span>
<span class="tx" style="left:659.66px;top:102.20px;font-size:18.1px;line-height:20.00px;color:#d0cc55;font-weight:bold;letter-spacing:3.4px;transform:scaleX(0.9529)">{}</span>
<span class="tx" style="left:992.61px;top:102.20px;font-size:18.8px;line-height:21.00px;color:#d4d4d4;letter-spacing:5px;transform:scaleX(1.1412)">{}</span>
<span class="tx" style="left:101.39px;top:1387.50px;font-size:16.5px;line-height:18.00px;color:#e7e7e7;transform:scaleX(0.8914)">PROBLEMS</span>
<span class="tx" style="left:251.01px;top:1387.50px;font-size:16.5px;line-height:18.00px;color:#969696;transform:scaleX(0.9228)">OUTPUT</span>
<span class="tx" style="left:342.07px;top:1387.50px;font-size:16.5px;line-height:18.00px;color:#969696;transform:scaleX(0.9049)">DEBUG CONSOLE</span>
<span class="tx" style="left:501.77px;top:1387.50px;font-size:16.5px;line-height:18.00px;color:#969696;transform:scaleX(0.9305)">TERMINAL</span>
<span class="tx" style="left:1151.21px;top:1385.30px;font-size:19.5px;line-height:22.00px;color:#888888;transform:scaleX(0.9288)">Filter (e.g. text, **/*.ts, !**/node_modules/**)</span>
<span class="tx" style="left:123.16px;top:1425.20px;font-size:18.1px;line-height:20.00px;color:#d0cc55;font-weight:bold;letter-spacing:3.4px;transform:scaleX(0.9765)">{}</span>
<span class="tx" style="left:149.32px;top:1426.70px;font-size:19.5px;line-height:22.00px;color:#d0d0d0;transform:scaleX(0.9841)">MyCMYKComposite1200dpi.json</span>
<span class="tx" style="left:437.77px;top:1428.70px;font-size:17.5px;line-height:20.00px;color:#8f8f8f;transform:scaleX(0.9739)">C:\HHR-INSTALLS\HHR-default\SW\TestConfig\JSON</span>
<span class="tx" style="left:161.30px;top:1459.50px;font-size:19.5px;line-height:22.00px;color:#d0d0d0;transform:scaleX(0.9959)">Colon expected</span>
<span class="tx" style="left:304.49px;top:1459.50px;font-size:19.5px;line-height:22.00px;color:#8f8f8f;transform:scaleX(0.9845)">json(515)</span>
<span class="tx" style="left:392.25px;top:1459.50px;font-size:19.5px;line-height:22.00px;color:#8f8f8f;transform:scaleX(1.0010)">[30, 5]</span>
<span class="tx" style="left:48.26px;top:1590.00px;font-size:18px;line-height:20.00px;color:#ffffff;transform:scaleX(0.7500)">1</span>
<span class="tx" style="left:88.07px;top:1590.00px;font-size:18px;line-height:20.00px;color:#ffffff;transform:scaleX(1.1086)">0</span>
<span class="tx" style="left:1432.04px;top:1590.00px;font-size:18px;line-height:20.00px;color:#ffffff;transform:scaleX(0.9710)">Ln 28, Col 6</span>
<span class="tx" style="left:1549.51px;top:1590.00px;font-size:18px;line-height:20.00px;color:#ffffff;transform:scaleX(0.9223)">Spaces: 2</span>
<span class="tx" style="left:1646.72px;top:1590.00px;font-size:18px;line-height:20.00px;color:#ffffff;transform:scaleX(0.9408)">UTF-8</span>
<span class="tx" style="left:1718.21px;top:1590.00px;font-size:18px;line-height:20.00px;color:#ffffff;transform:scaleX(0.8587)">LF</span>
<span class="tx" style="left:1759.57px;top:1590.00px;font-size:18px;line-height:20.00px;color:#ffffff;transform:scaleX(0.9189)">JSON</span>
<span class="tx" style="left:1086.63px;top:1004.70px;font-size:18.6px;line-height:21.00px;color:#ffffff;transform:scaleX(1.0094)">IntelliSense key &amp; value hinting</span>
<span class="tx" style="left:946.28px;top:1438.40px;font-size:18.6px;line-height:21.00px;color:#ffffff;transform:scaleX(1.0162)">Real-time schema validation reporting</span>
</div>
</div>
</body>
</html>
